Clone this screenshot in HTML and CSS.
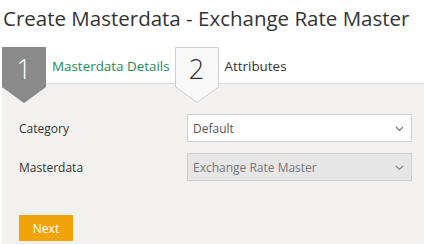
FILE: index.html
```html
<!DOCTYPE html>
<html lang="en">
<head>
    <meta charset="UTF-8">
    <meta name="viewport" content="width=device-width, initial-scale=1.0">
    <title>Create Masterdata</title>
    <link rel="stylesheet" href="styles.css">
</head>
<body>
    <h1 class="page-title">Create Masterdata - Exchange Rate Master</h1>

    <div class="wizard">
        <div class="steps">
            <div class="step active">
                <div class="badge">
                    <svg class="badge-shape" width="44" height="56" viewBox="0 0 44 56">
                        <polygon points="0,0 44,0 44,40 22,56 0,40" fill="#8a8a8a"/>
                    </svg>
                    <span class="badge-num">1</span>
                </div>
                <span class="step-label">Masterdata Details</span>
            </div>
            <div class="step">
                <div class="badge">
                    <svg class="badge-shape" width="44" height="56" viewBox="0 0 44 56">
                        <polygon points="0.5,0.5 43.5,0.5 43.5,40 22,55.5 0.5,40" fill="#f8f8f8" stroke="#cfcfcf"/>
                    </svg>
                    <span class="badge-num">2</span>
                </div>
                <span class="step-label">Attributes</span>
            </div>
        </div>

        <div class="panel">
            <div class="form-row">
                <label for="category">Category</label>
                <div class="select-box">
                    <span>Default</span>
                    <svg class="chevron" width="9" height="6" viewBox="0 0 9 6"><polyline points="1,1 4.5,4.5 8,1" fill="none" stroke="#777" stroke-width="1.2"/></svg>
                </div>
            </div>
            <div class="form-row">
                <label for="masterdata">Masterdata</label>
                <div class="select-box disabled">
                    <span>Exchange Rate Master</span>
                    <svg class="chevron" width="9" height="6" viewBox="0 0 9 6"><polyline points="1,1 4.5,4.5 8,1" fill="none" stroke="#888" stroke-width="1.2"/></svg>
                </div>
            </div>
            <button type="button" class="next-btn">Next</button>
        </div>
    </div>
</body>
</html>
```

FILE: styles.css
```css
body {
    margin: 0;
    font-family: "Open Sans", "Noto Sans", sans-serif;
    color: #333;
    background-color: #fff;
}

.page-title {
    margin: 0;
    padding: 4px 3px 0;
    height: 47px;
    box-sizing: border-box;
    font-size: 20.5px;
    font-weight: 400;
    color: #333;
}

.wizard {
    margin-left: 2px;
}

.steps {
    display: flex;
    height: 36px;
    border-bottom: 1px solid #dcdcdc;
    background-color: #fff;
}

.step {
    display: flex;
    align-items: flex-start;
}

.badge {
    position: relative;
    z-index: 1;
    width: 44px;
    height: 40px;
}

.badge-shape {
    position: absolute;
    top: 0;
    left: 0;
}

.badge-num {
    position: relative;
    display: block;
    text-align: center;
    font-size: 27px;
    font-weight: 300;
    line-height: 44px;
    color: #fff;
}

.step + .step .badge-num {
    color: #333;
}

.step-label {
    font-size: 13.4px;
    line-height: 38px;
    padding: 0 5px 0 6px;
    color: #333;
}

.step.active .step-label {
    color: #1e8a57;
}

.panel {
    background-color: #f2f1f0;
    height: 160px;
    padding: 30px 12px 0 17px;
    box-sizing: border-box;
}

.form-row {
    display: flex;
    align-items: center;
    margin-bottom: 11px;
}

.form-row label {
    width: 168px;
    font-size: 12px;
    color: #333;
}

.select-box {
    flex: 1;
    height: 26px;
    display: flex;
    align-items: center;
    justify-content: space-between;
    padding: 0 7px 0 5px;
    border: 1px solid #cfcfcf;
    background-color: #fff;
    font-size: 12px;
    color: #555;
}

.select-box.disabled {
    background-color: #e6e6e6;
    color: #777;
}

.chevron {
    margin-top: 2px;
}

.next-btn {
    margin-top: 23px;
    width: 54px;
    height: 26px;
    border: none;
    background-color: #f0a30a;
    color: #fff;
    font-family: inherit;
    font-size: 12px;
    cursor: pointer;
}
```
